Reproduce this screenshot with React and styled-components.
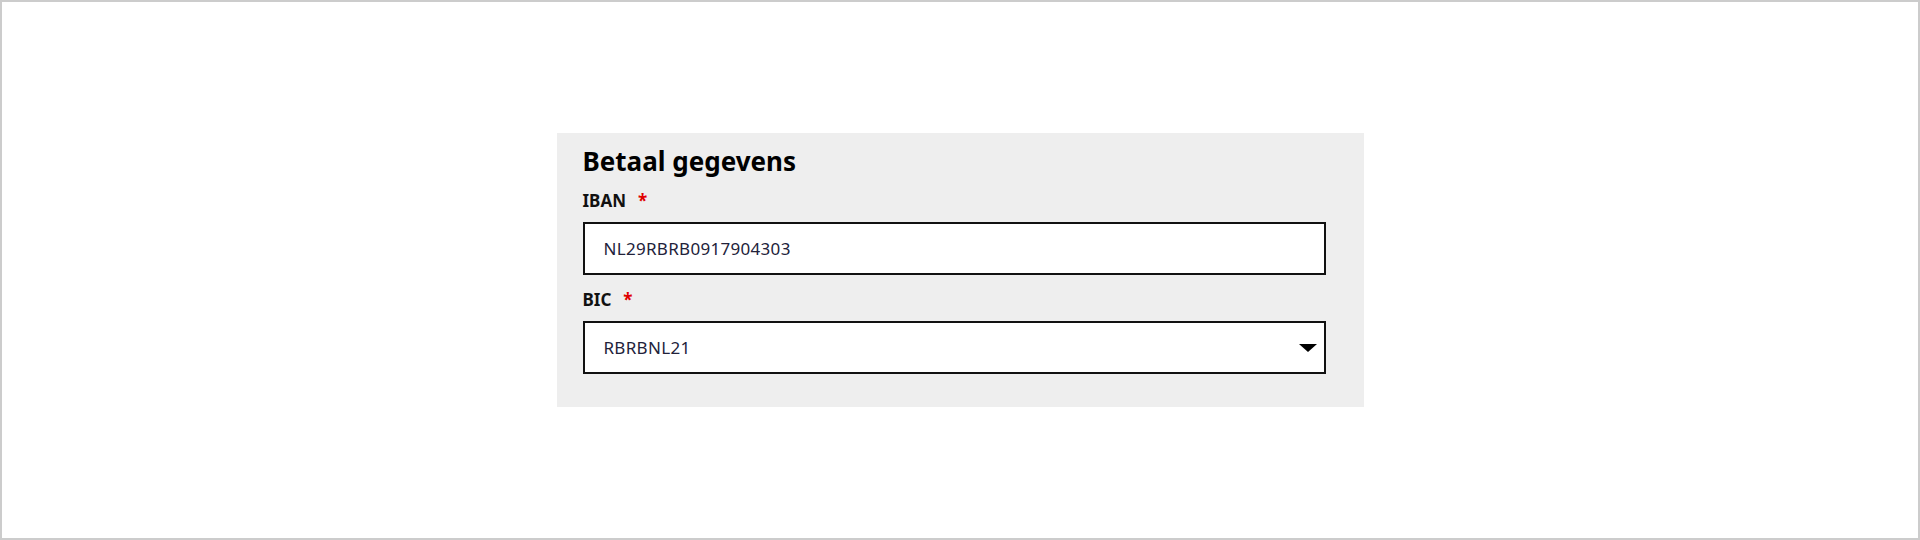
import React from 'react';
import styled, { createGlobalStyle } from 'styled-components';

const GlobalStyle = createGlobalStyle`
  html, body {
    margin: 0;
    padding: 0;
  }
  body {
    font-family: "Noto Sans", "Open Sans", sans-serif;
    background: #fff;
  }
  * {
    box-sizing: border-box;
  }
`

const Page = styled.div`
  width: 1920px;
  height: 540px;
  border: 2px solid #cccccc;
  display: flex;
  align-items: center;
  justify-content: center;
`

const Panel = styled.section`
  width: 807px;
  background: #eeeeee;
  padding: 11px 38px 33px 26px;
`

const Title = styled.h2`
  margin: 0 0 10px 0;
  font-size: 26px;
  line-height: 34px;
  font-weight: 700;
  color: #000;
`

const Field = styled.div`
  display: flex;
  flex-direction: column;
  margin-top: ${p => p.spaced ? '12px' : '0'};
`

const Label = styled.label`
  font-size: 17px;
  line-height: 26px;
  font-weight: 700;
  color: #111;
  margin-bottom: 8px;
`

const Required = styled.span`
  color: #e00000;
  margin-left: 12px;
  font-weight: 700;
`

const Box = styled.div`
  position: relative;
  height: 53px;
  background: #fff;
  border: 2px solid #111;
  display: flex;
  align-items: center;
  padding: 0 19px;
  font-size: 17px;
  color: #22223a;
  letter-spacing: 0.3px;
`

const Arrow = styled.span`
  position: absolute;
  right: 7px;
  top: 50%;
  margin-top: -4px;
  width: 0;
  height: 0;
  border-left: 9px solid transparent;
  border-right: 9px solid transparent;
  border-top: 8px solid #000;
`

export default function App() {
  return (
    <>
      <GlobalStyle />
      <Page>
        <Panel>
          <Title>Betaal gegevens</Title>
          <Field>
            <Label>IBAN<Required>*</Required></Label>
            <Box>NL29RBRB0917904303</Box>
          </Field>
          <Field spaced>
            <Label>BIC<Required>*</Required></Label>
            <Box>
              RBRBNL21
              <Arrow />
            </Box>
          </Field>
        </Panel>
      </Page>
    </>
  );
}
